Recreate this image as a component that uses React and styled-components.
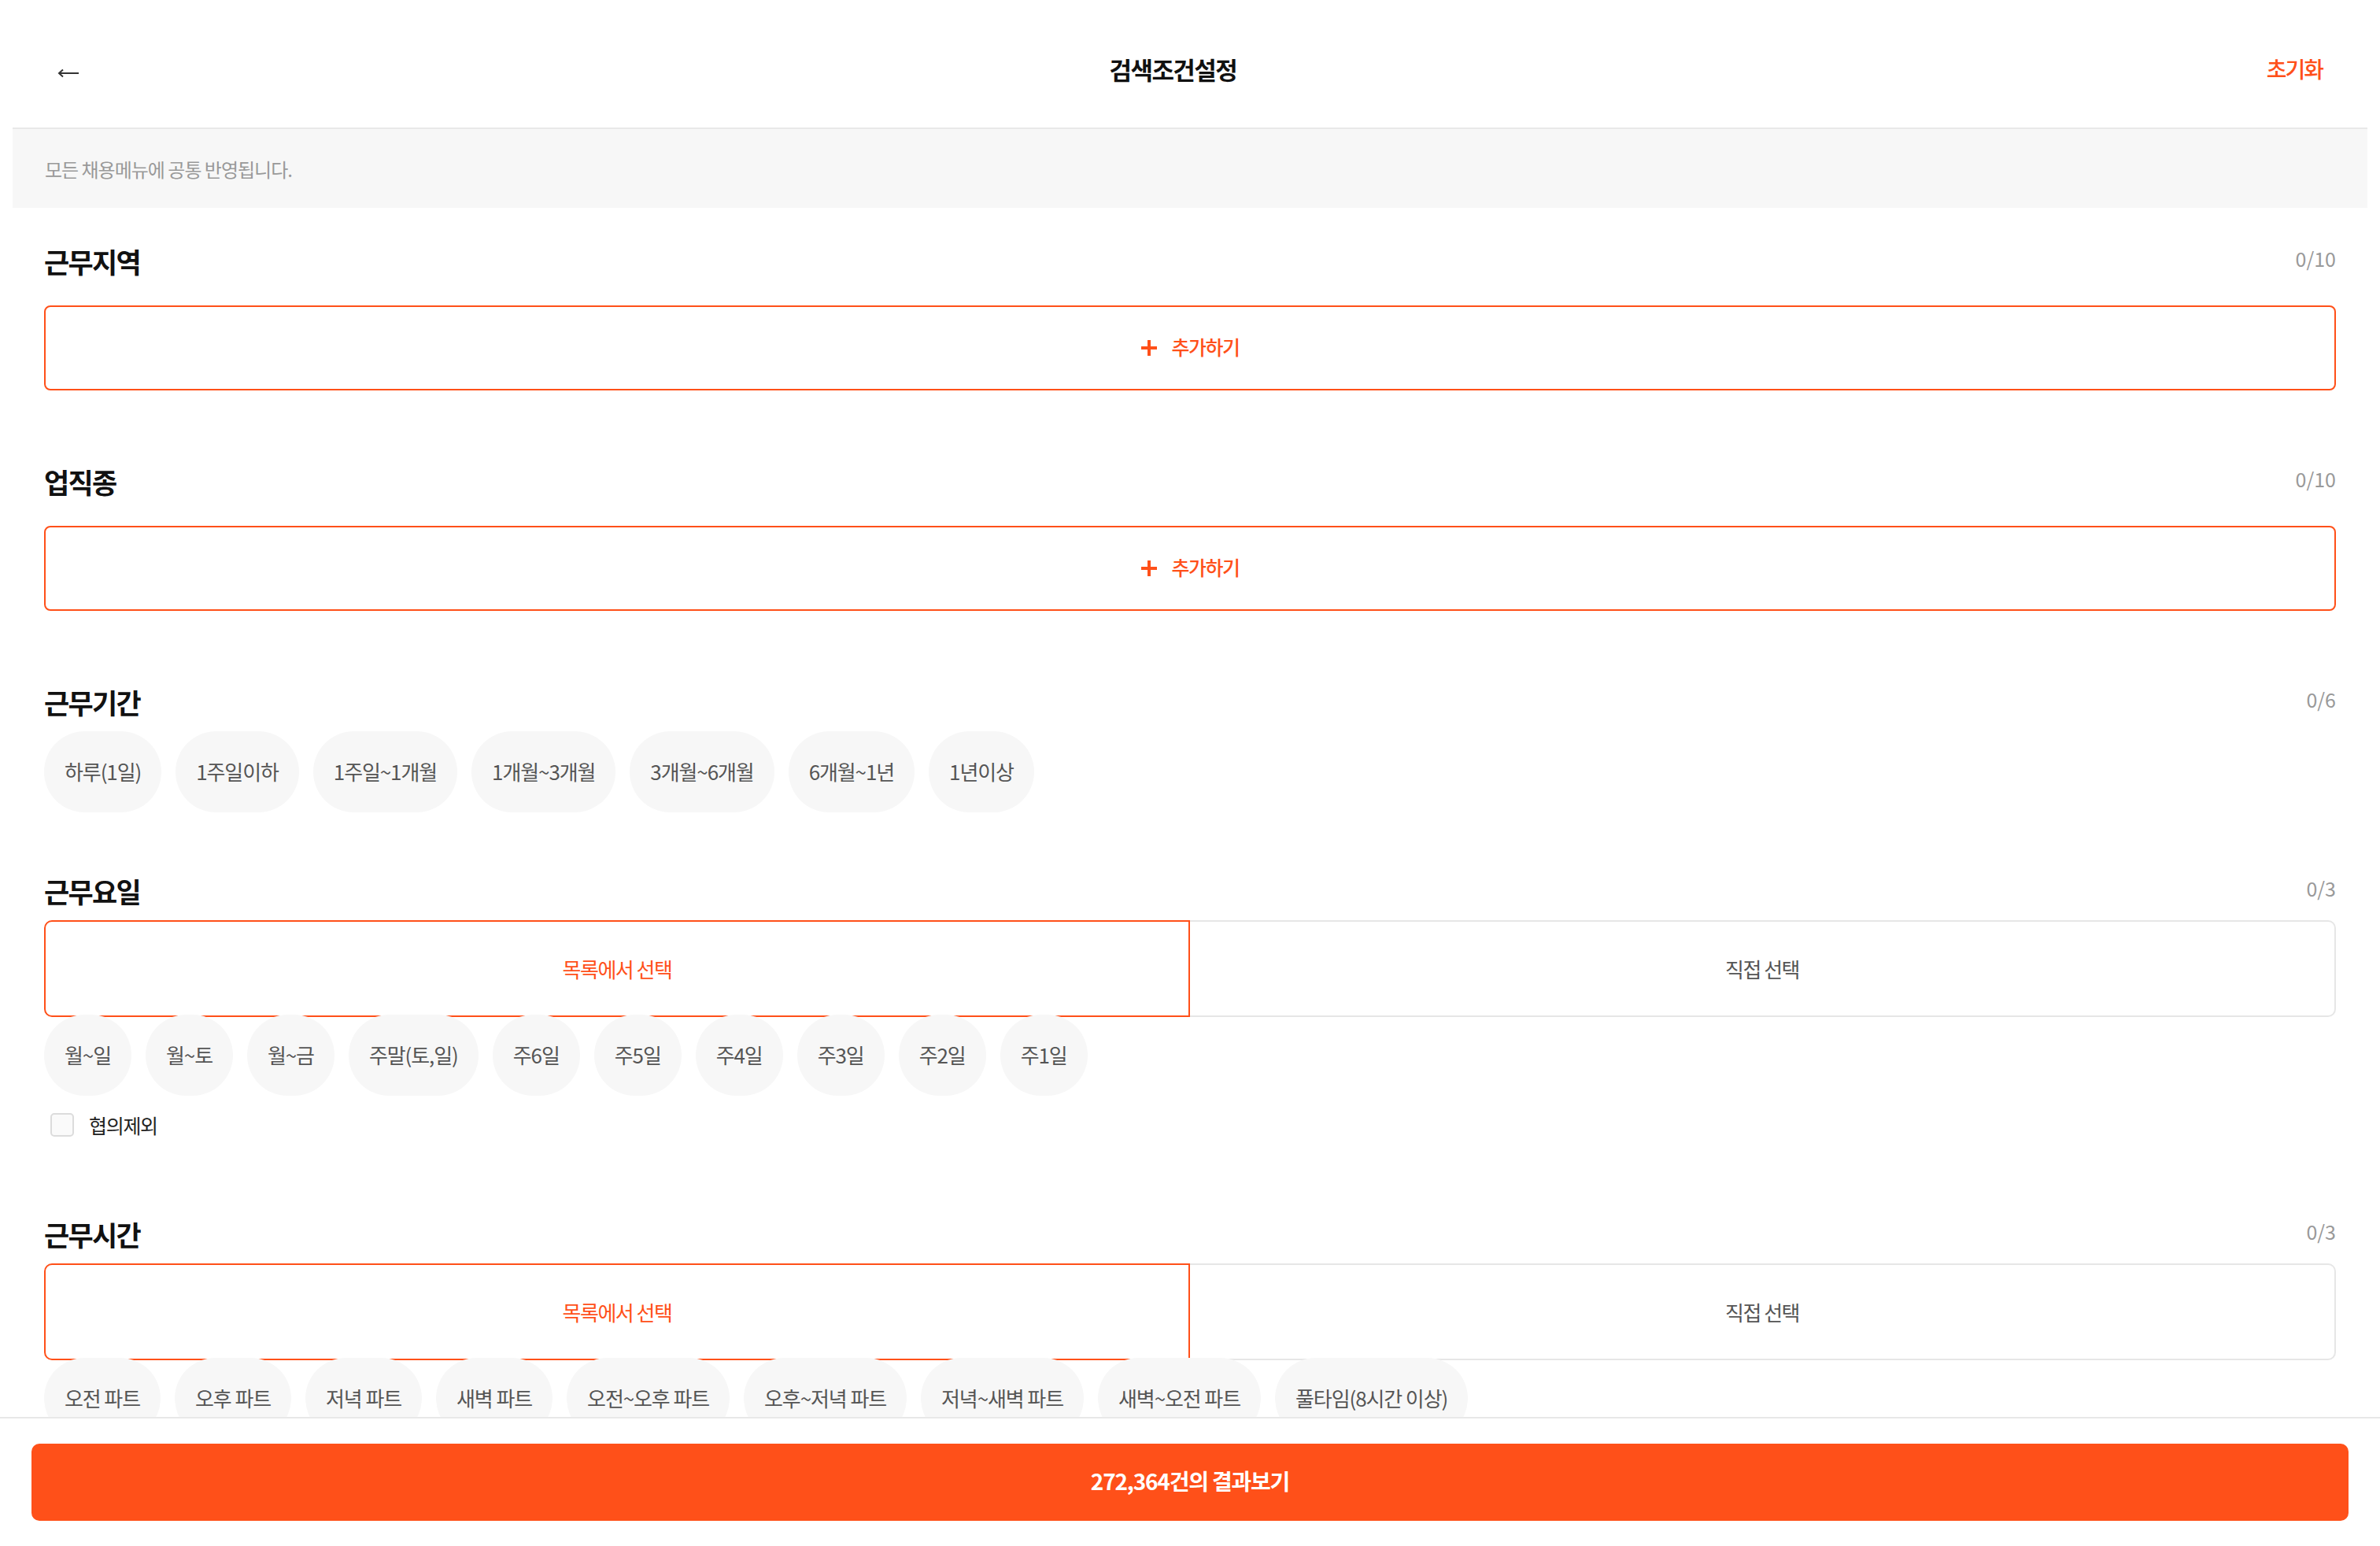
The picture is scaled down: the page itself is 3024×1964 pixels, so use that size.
import React from 'react';
import styled, { createGlobalStyle } from 'styled-components';

const ORANGE = '#ff5019';

const GlobalStyle = createGlobalStyle`
  body {
    margin: 16px;
    background: #fff;
    font-family: "Noto Sans CJK KR", "Noto Sans", sans-serif;
    color: #111;
  }
  * { box-sizing: border-box; }
`;

const Header = styled.header`
  height: 148px;
  display: flex;
  align-items: center;
  justify-content: space-between;
  padding: 0 57px;
  border-bottom: 2px solid #e8e8e8;
`;

const BackButton = styled.button`
  border: none;
  background: none;
  padding: 0;
  margin-top: 7px;
  display: flex;
  cursor: pointer;
`;

const HeaderTitle = styled.h1`
  margin: -4px 0 0;
  font-size: 31px;
  letter-spacing: -1.6px;
  font-weight: 700;
  color: #111;
`;

const ResetButton = styled.button`
  border: none;
  background: none;
  padding: 0;
  margin-top: -4px;
  font-family: inherit;
  font-size: 28px;
  letter-spacing: -2px;
  font-weight: 500;
  color: ${ORANGE};
  cursor: pointer;
`;

const Notice = styled.div`
  height: 100px;
  display: flex;
  align-items: center;
  padding-left: 41px;
  background: #f7f7f7;
  color: #999;
  font-size: 24px;
  letter-spacing: -1px;
`;

const Content = styled.main`
  padding: 0 40px 200px;
`;

const Section = styled.section`
  padding-top: ${p => (p.$first ? '43px' : '75px')};
`;

const SectionHead = styled.div`
  height: 50px;
  display: flex;
  align-items: center;
  justify-content: space-between;
`;

const SectionTitle = styled.h2`
  margin: -2px 0 0;
  font-size: 35px;
  letter-spacing: -1.7px;
  font-weight: 700;
  color: #111;
`;

const Count = styled.span`
  font-size: 25px;
  color: #999;
  margin-top: -8px;
`;

const AddBox = styled.button`
  width: 100%;
  height: 108px;
  margin: 31px 0 16px;
  padding: 0 0 4px;
  display: flex;
  align-items: center;
  justify-content: center;
  gap: 17px;
  border: 2px solid ${ORANGE};
  border-radius: 8px;
  background: #fff;
  color: ${ORANGE};
  font-family: inherit;
  font-size: 25px;
  letter-spacing: -1.5px;
  font-weight: 500;
  cursor: pointer;

  svg { margin-top: 4px; }
`;

const ChipRow = styled.div`
  display: flex;
  flex-wrap: wrap;
  gap: 18px;
  margin-top: ${p => (p.$overlap ? '-3px' : '12px')};
`;

const Chip = styled.button`
  height: 103px;
  padding: 0 26px 2px;
  border: none;
  border-radius: 52px;
  background: #f7f7f7;
  color: #555;
  font-family: inherit;
  font-size: 26px;
  letter-spacing: -1.1px;
  cursor: pointer;
`;

const TabBar = styled.div`
  display: grid;
  grid-template-columns: 1fr 1fr;
  height: 123px;
  margin-top: 12px;
`;

const Tab = styled.button`
  border: 2px solid ${p => (p.$active ? ORANGE : '#e6e6e6')};
  border-left: ${p => (p.$side === 'right' ? 'none' : undefined)};
  border-radius: ${p => (p.$side === 'left' ? '10px 0 0 10px' : '0 10px 10px 0')};
  padding-bottom: 2px;
  background: #fff;
  color: ${p => (p.$active ? ORANGE : '#555')};
  font-family: inherit;
  font-size: 26px;
  letter-spacing: -1.5px;
  cursor: pointer;
`;

const CheckRow = styled.label`
  display: flex;
  align-items: center;
  gap: 19px;
  height: 30px;
  margin: 22px 0 24px 8px;
  font-size: 25px;
  letter-spacing: -1.3px;
  color: #222;
`;

const CheckBox = styled.span`
  width: 30px;
  height: 30px;
  border: 2px solid #dcdcdc;
  border-radius: 5px;
  background: #fafafa;
`;

const Footer = styled.footer`
  position: fixed;
  left: 0;
  right: 0;
  bottom: 0;
  padding: 32px 40px;
  background: #fff;
  border-top: 2px solid #e8e8e8;
  z-index: 10;
`;

const ResultButton = styled.button`
  width: 100%;
  height: 98px;
  padding-bottom: 5px;
  border: none;
  border-radius: 10px;
  background: ${ORANGE};
  color: #fff;
  font-family: inherit;
  font-size: 28px;
  letter-spacing: -1.2px;
  font-weight: 700;
  cursor: pointer;
`;

const PlusIcon = () => (
  <svg width="22" height="22" viewBox="0 0 22 22">
    <path d="M11 1v20M1 11h20" stroke={ORANGE} strokeWidth="4" fill="none" />
  </svg>
);

const ArrowIcon = () => (
  <svg width="28" height="12" viewBox="0 0 28 12">
    <path d="M27 6H2M7 1.5L2 6l5 4.5" stroke="#333" strokeWidth="2" fill="none" />
  </svg>
);

const periods = ['하루(1일)', '1주일이하', '1주일~1개월', '1개월~3개월', '3개월~6개월', '6개월~1년', '1년이상'];
const days = ['월~일', '월~토', '월~금', '주말(토,일)', '주6일', '주5일', '주4일', '주3일', '주2일', '주1일'];
const times = ['오전 파트', '오후 파트', '저녁 파트', '새벽 파트', '오전~오후 파트', '오후~저녁 파트', '저녁~새벽 파트', '새벽~오전 파트', '풀타임(8시간 이상)'];

const Tabs = () => (
  <TabBar>
    <Tab $side="left" $active>목록에서 선택</Tab>
    <Tab $side="right">직접 선택</Tab>
  </TabBar>
);

const App = () => {
  return (
    <>
      <GlobalStyle />
      <Header>
        <BackButton aria-label="뒤로"><ArrowIcon /></BackButton>
        <HeaderTitle>검색조건설정</HeaderTitle>
        <ResetButton>초기화</ResetButton>
      </Header>
      <Notice>모든 채용메뉴에 공통 반영됩니다.</Notice>
      <Content>
        <Section $first>
          <SectionHead>
            <SectionTitle>근무지역</SectionTitle>
            <Count>0/10</Count>
          </SectionHead>
          <AddBox><PlusIcon />추가하기</AddBox>
        </Section>

        <Section>
          <SectionHead>
            <SectionTitle>업직종</SectionTitle>
            <Count>0/10</Count>
          </SectionHead>
          <AddBox><PlusIcon />추가하기</AddBox>
        </Section>

        <Section>
          <SectionHead>
            <SectionTitle>근무기간</SectionTitle>
            <Count>0/6</Count>
          </SectionHead>
          <ChipRow>
            {periods.map(p => <Chip key={p}>{p}</Chip>)}
          </ChipRow>
        </Section>

        <Section>
          <SectionHead>
            <SectionTitle>근무요일</SectionTitle>
            <Count>0/3</Count>
          </SectionHead>
          <Tabs />
          <ChipRow $overlap>
            {days.map(d => <Chip key={d}>{d}</Chip>)}
          </ChipRow>
          <CheckRow>
            <CheckBox />
            협의제외
          </CheckRow>
        </Section>

        <Section>
          <SectionHead>
            <SectionTitle>근무시간</SectionTitle>
            <Count>0/3</Count>
          </SectionHead>
          <Tabs />
          <ChipRow $overlap>
            {times.map(t => <Chip key={t}>{t}</Chip>)}
          </ChipRow>
        </Section>
      </Content>
      <Footer>
        <ResultButton>272,364건의 결과보기</ResultButton>
      </Footer>
    </>
  );
};

export default App;
